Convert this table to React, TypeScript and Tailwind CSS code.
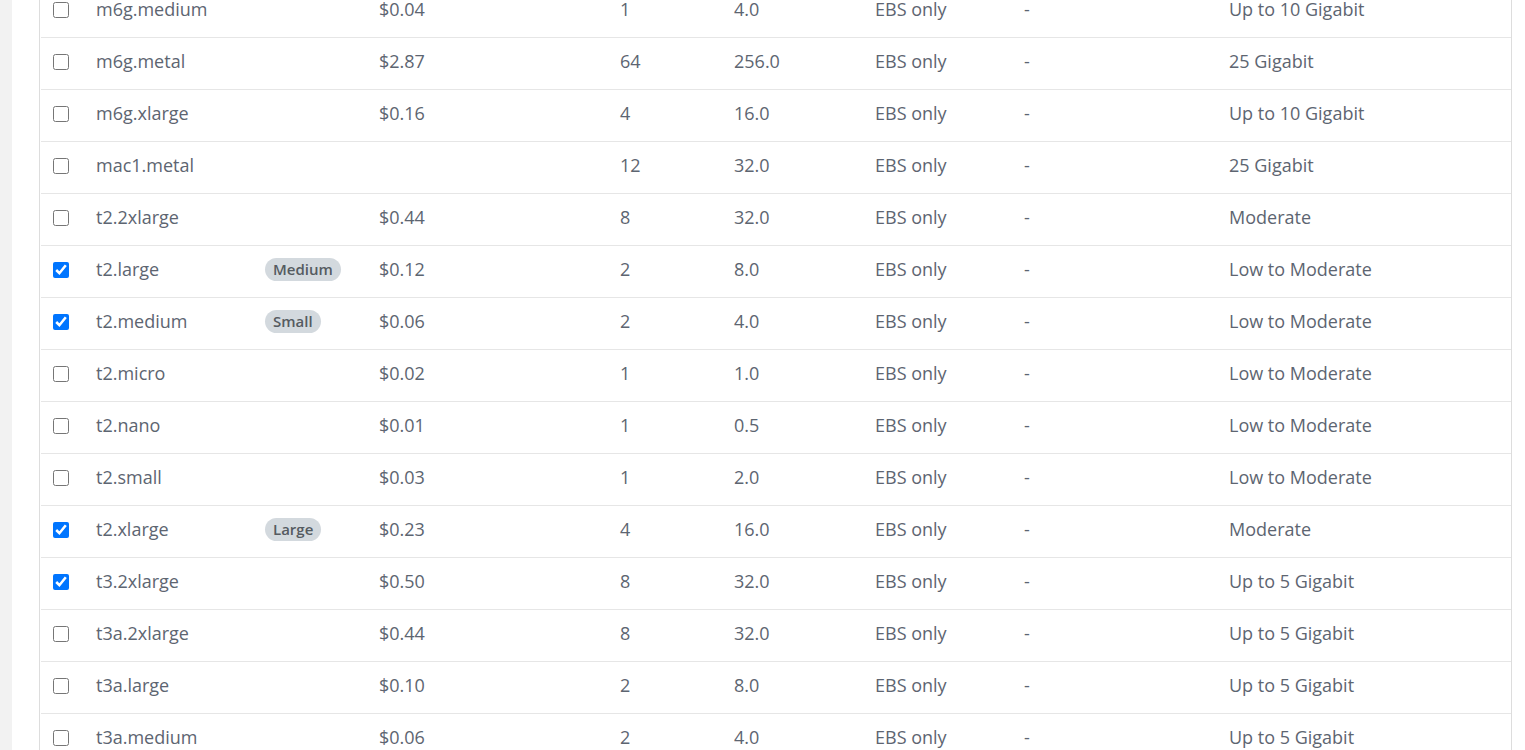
import React from 'react';

/* ─── Data ───────────────────────────────────────────────────────────── */
type Row = {
  name: string;
  size?: string;
  price: string;
  vcpu: string;
  mem: string;
  storage: string;
  gpu: string;
  network: string;
  checked?: boolean;
};

const rows: Row[] = [
  { name: 'm6g.medium', price: '$0.04', vcpu: '1', mem: '4.0', storage: 'EBS only', gpu: '-', network: 'Up to 10 Gigabit' },
  { name: 'm6g.metal', price: '$2.87', vcpu: '64', mem: '256.0', storage: 'EBS only', gpu: '-', network: '25 Gigabit' },
  { name: 'm6g.xlarge', price: '$0.16', vcpu: '4', mem: '16.0', storage: 'EBS only', gpu: '-', network: 'Up to 10 Gigabit' },
  { name: 'mac1.metal', price: '', vcpu: '12', mem: '32.0', storage: 'EBS only', gpu: '-', network: '25 Gigabit' },
  { name: 't2.2xlarge', price: '$0.44', vcpu: '8', mem: '32.0', storage: 'EBS only', gpu: '-', network: 'Moderate' },
  { name: 't2.large', size: 'Medium', price: '$0.12', vcpu: '2', mem: '8.0', storage: 'EBS only', gpu: '-', network: 'Low to Moderate', checked: true },
  { name: 't2.medium', size: 'Small', price: '$0.06', vcpu: '2', mem: '4.0', storage: 'EBS only', gpu: '-', network: 'Low to Moderate', checked: true },
  { name: 't2.micro', price: '$0.02', vcpu: '1', mem: '1.0', storage: 'EBS only', gpu: '-', network: 'Low to Moderate' },
  { name: 't2.nano', price: '$0.01', vcpu: '1', mem: '0.5', storage: 'EBS only', gpu: '-', network: 'Low to Moderate' },
  { name: 't2.small', price: '$0.03', vcpu: '1', mem: '2.0', storage: 'EBS only', gpu: '-', network: 'Low to Moderate' },
  { name: 't2.xlarge', size: 'Large', price: '$0.23', vcpu: '4', mem: '16.0', storage: 'EBS only', gpu: '-', network: 'Moderate', checked: true },
  { name: 't3.2xlarge', price: '$0.50', vcpu: '8', mem: '32.0', storage: 'EBS only', gpu: '-', network: 'Up to 5 Gigabit', checked: true },
  { name: 't3a.2xlarge', price: '$0.44', vcpu: '8', mem: '32.0', storage: 'EBS only', gpu: '-', network: 'Up to 5 Gigabit' },
  { name: 't3a.large', price: '$0.10', vcpu: '2', mem: '8.0', storage: 'EBS only', gpu: '-', network: 'Up to 5 Gigabit' },
  { name: 't3a.medium', price: '$0.06', vcpu: '2', mem: '4.0', storage: 'EBS only', gpu: '-', network: 'Up to 5 Gigabit' },
];

/* ─── Component ──────────────────────────────────────────────────────── */
export default function App() {
  return (
    <div className="flex h-[750px] overflow-hidden bg-white font-['Open_Sans',sans-serif] text-[18px] text-[#5d6571]">
      {/* left rail */}
      <div className="w-3 shrink-0 bg-[#f2f2f2]" />

      <div className="flex-1 pl-[27px] pr-[13px]">
        <div className="-mt-[14px] border-x border-[#dddddd]">
          {rows.map((r) => (
            <div
              key={r.name}
              className="ml-px grid h-[52px] grid-cols-[55px_169px_114px_241px_114px_141px_149px_205px_1fr] items-center border-b border-[#e6e6e6] pb-1"
            >
              <div className="pl-3 flex items-center">
                <input
                  type="checkbox"
                  defaultChecked={r.checked}
                  className="m-0 h-4 w-4"
                />
              </div>
              <div>{r.name}</div>
              <div className="flex">
                {r.size && (
                  <span className="inline-flex h-[23px] items-center rounded-full bg-[#d3d9de] px-2 text-[15px] font-semibold text-[#555b61]">
                    {r.size}
                  </span>
                )}
              </div>
              <div>{r.price}</div>
              <div>{r.vcpu}</div>
              <div>{r.mem}</div>
              <div>{r.storage}</div>
              <div>{r.gpu}</div>
              <div>{r.network}</div>
            </div>
          ))}
        </div>
      </div>
    </div>
  );
}
